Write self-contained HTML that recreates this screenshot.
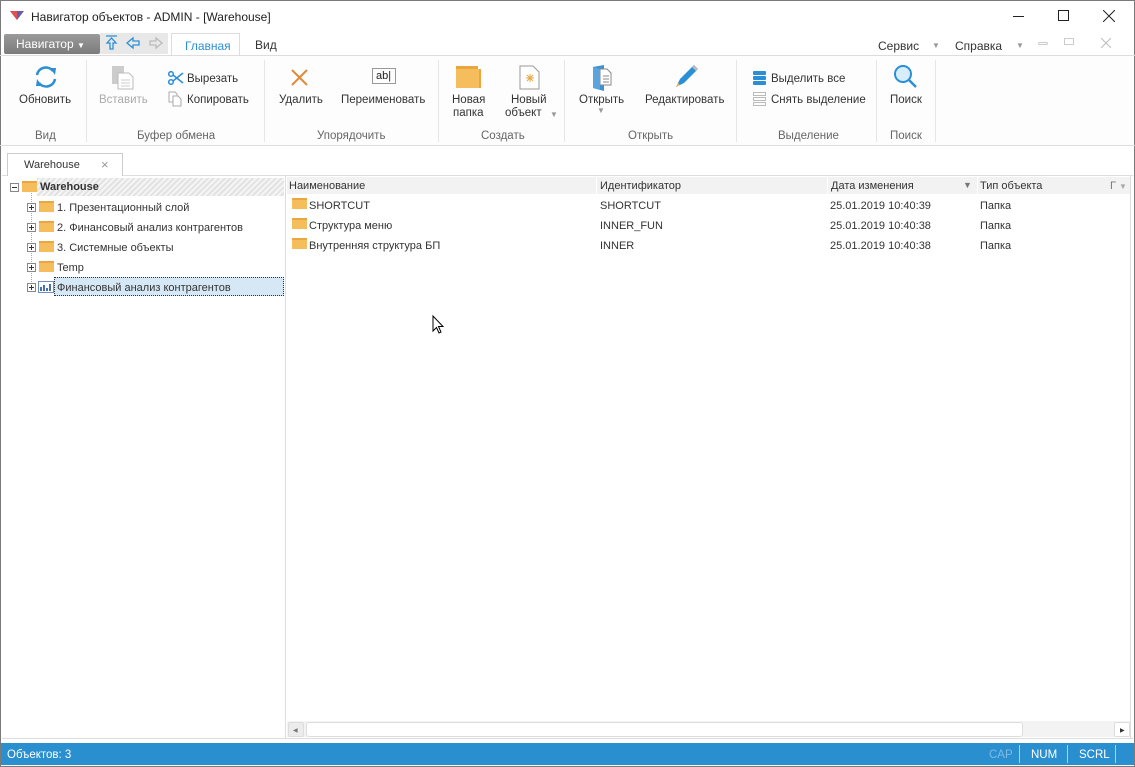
<!DOCTYPE html>
<html><head><meta charset="utf-8"><style>
*{margin:0;padding:0;box-sizing:border-box}
body{width:1135px;height:767px;position:relative;overflow:hidden;background:#fff;font-family:"Liberation Sans","DejaVu Sans",sans-serif;font-size:11px;color:#333}
.a{position:absolute;white-space:nowrap}
.lbl{color:#666}
.sep{position:absolute;top:60px;width:1px;height:82px;background:#e6e6e6}
.fold{position:absolute;width:15px;height:11px;background:#f6bd5d;border-top:2px solid #eaa640}
.pm{position:absolute;width:9px;height:9px;border:1px solid #888;background:#fff}
.pm:before{content:"";position:absolute;left:1px;top:3px;width:5px;height:1px;background:#333}
.pm.p:after{content:"";position:absolute;left:3px;top:1px;width:1px;height:5px;background:#333}
</style></head><body>
<div class="a" style="left:0;top:0;width:1135px;height:767px;border:1px solid #7a7a7a"></div>
<svg class="a" style="left:10px;top:11px" width="14" height="10"><path d="M0 0 L14 0 L7 9Z" fill="#6a5aa8"/><path d="M0 0 L7 0 L7 9Z" fill="#e05050"/></svg>
<div class="a" style="left:31px;top:10px;font-size:12px;color:#222">Навигатор объектов - ADMIN - [Warehouse]</div>
<div class="a" style="left:1013px;top:16px;width:11px;height:1px;background:#222"></div>
<div class="a" style="left:1058px;top:10px;width:11px;height:11px;border:1px solid #222"></div>
<svg class="a" style="left:1103px;top:10px" width="12" height="12"><path d="M0 0L12 12M12 0L0 12" stroke="#222"/></svg>
<div class="a" style="left:4px;top:34px;width:96px;height:20px;background:linear-gradient(#9a9a9a,#7c7c7c);border-radius:2px;color:#fff;font-size:12px;padding:3px 0 0 12px">Навигатор <span style="font-size:8px">▼</span></div>
<div class="a" style="left:100px;top:33px;width:68px;height:21px;background:#e8e8e8"></div>
<svg class="a" style="left:104px;top:35px" width="64" height="16"><path d="M2 1H13M7.5 3L3 8H6V14H9V8H12Z" fill="none" stroke="#2b8fd6" stroke-width="1.3"/><path d="M23 8L29 3V6H35V10H29V13Z" fill="none" stroke="#2b8fd6" stroke-width="1.3"/><path d="M58 8L52 3V6H46V10H52V13Z" fill="none" stroke="#bbb" stroke-width="1.3"/></svg>
<div class="a" style="left:171px;top:33px;width:69px;height:23px;background:#fff;border:1px solid #ddd;border-bottom:none;color:#2b8fd6;font-size:12px;padding:5px 0 0 13px">Главная</div>
<div class="a" style="left:255px;top:38px;font-size:12px">Вид</div>
<div class="a" style="left:878px;top:39px;font-size:12px">Сервис</div>
<div class="a" style="left:932px;top:41px;font-size:8px;color:#999">▼</div>
<div class="a" style="left:955px;top:39px;font-size:12px">Справка</div>
<div class="a" style="left:1016px;top:41px;font-size:8px;color:#999">▼</div>
<div class="a" style="left:1038px;top:42px;width:10px;height:3px;border:1px solid #ccc;border-radius:2px"></div>
<div class="a" style="left:1064px;top:38px;width:10px;height:7px;border:1px solid #ccc"></div>
<svg class="a" style="left:1101px;top:38px" width="10" height="10"><path d="M0 0L10 10M10 0L0 10" stroke="#bbb"/></svg>
<div class="a" style="left:0;top:55px;width:1135px;height:1px;background:#ddd"></div>
<div class="a" style="left:1px;top:56px;width:1133px;height:90px;background:#fdfdfd"></div>
<div class="a" style="left:0;top:145px;width:1135px;height:1px;background:#ddd"></div>
<svg class="a" style="left:33px;top:64px" width="26" height="26"><path d="M4 11A9 9 0 0 1 20 7" fill="none" stroke="#2b8fd6" stroke-width="2.5"/><path d="M22 15A9 9 0 0 1 6 19" fill="none" stroke="#2b8fd6" stroke-width="2.5"/><path d="M17 4L23 4L22 11Z M9 22L3 22L4 15Z" fill="#2b8fd6"/></svg>
<div class="a" style="left:19px;top:94px;font-size:11.5px">Обновить</div>
<div class="a lbl" style="left:35px;top:130px;font-size:11.5px">Вид</div>
<div class="sep" style="left:86px"></div>
<svg class="a" style="left:111px;top:65px" width="24" height="26"><rect x="1" y="1" width="12" height="18" fill="#ccc"/><path d="M7 8H18L22 12V24H7Z" fill="#fff" stroke="#bbb"/><path d="M10 15H19M10 18H19M10 21H19" stroke="#ccc"/></svg>
<div class="a" style="left:99px;top:94px;font-size:11.5px;color:#aaa">Вставить</div>
<svg class="a" style="left:168px;top:71px" width="16" height="14"><circle cx="3" cy="3" r="2.3" fill="none" stroke="#2b8fd6" stroke-width="1.5"/><circle cx="3" cy="11" r="2.3" fill="none" stroke="#2b8fd6" stroke-width="1.5"/><path d="M5 4L15 12M5 10L15 2" stroke="#2b8fd6" stroke-width="1.6"/></svg>
<div class="a" style="left:187px;top:73px;font-size:11.5px">Вырезать</div>
<svg class="a" style="left:168px;top:91px" width="14" height="16"><path d="M1 1H7L9 3V11H1Z" fill="#fff" stroke="#aaa"/><path d="M5 5H10L13 8V15H5Z" fill="#fff" stroke="#aaa"/></svg>
<div class="a" style="left:187px;top:94px;font-size:11.5px">Копировать</div>
<div class="a lbl" style="left:137px;top:130px;font-size:11.5px">Буфер обмена</div>
<div class="sep" style="left:264px"></div>
<svg class="a" style="left:291px;top:69px" width="17" height="17"><path d="M1 1L16 16M16 1L1 16" stroke="#e08a3c" stroke-width="2"/></svg>
<div class="a" style="left:279px;top:94px;font-size:11.5px">Удалить</div>
<div class="a" style="left:372px;top:68px;width:24px;height:16px;border:1px solid #999;font-size:11px;padding:1px 0 0 3px;color:#222">ab|</div>
<div class="a" style="left:341px;top:94px;font-size:11.5px">Переименовать</div>
<div class="a lbl" style="left:317px;top:130px;font-size:11.5px">Упорядочить</div>
<div class="sep" style="left:438px"></div>
<div class="a" style="left:456px;top:66px;width:22px;height:4px;background:#eaa640"></div>
<div class="a" style="left:456px;top:69px;width:25px;height:19px;background:#f6bd5d;border-right:2px solid #eaa640"></div>
<div class="a" style="left:452px;top:94px;font-size:11.5px">Новая</div>
<div class="a" style="left:453px;top:107px;font-size:11.5px">папка</div>
<svg class="a" style="left:519px;top:65px" width="22" height="25"><path d="M1 1H14L20 7V24H1Z" fill="#fff" stroke="#999"/><path d="M11 9V17M7 13H15M8 10L14 16M14 10L8 16" stroke="#eaa640"/></svg>
<div class="a" style="left:511px;top:94px;font-size:11.5px">Новый</div>
<div class="a" style="left:505px;top:107px;font-size:11.5px">объект</div>
<div class="a" style="left:550px;top:110px;font-size:8px;color:#999">▼</div>
<div class="a lbl" style="left:481px;top:130px;font-size:11.5px">Создать</div>
<div class="sep" style="left:564px"></div>
<svg class="a" style="left:592px;top:64px" width="24" height="28"><path d="M1 3L12 1V27L1 24Z" fill="#3d92d6"/><path d="M8 5H15L19 9V21H8Z" fill="#fff" stroke="#888"/><path d="M11 12H17M11 15H17M11 18H17" stroke="#888"/><path d="M1 3L8 5V25L1 24Z" fill="#5aa5e0"/></svg>
<div class="a" style="left:579px;top:94px;font-size:11.5px">Открыть</div>
<div class="a" style="left:597px;top:106px;font-size:8px;color:#999">▼</div>
<svg class="a" style="left:672px;top:63px" width="28" height="28"><path d="M4 24L8 16L22 2L26 6L12 20Z" fill="#2b8fd6"/><path d="M22 2L26 6L24 8L20 4Z" fill="#bbb"/><path d="M4 24L6 20L8 22Z" fill="#f2b25a"/></svg>
<div class="a" style="left:645px;top:94px;font-size:11.5px">Редактировать</div>
<div class="a lbl" style="left:628px;top:130px;font-size:11.5px">Открыть</div>
<div class="sep" style="left:736px"></div>
<svg class="a" style="left:753px;top:71px" width="13" height="15"><rect x="0" y="0" width="13" height="4" rx="1" fill="#2b8fd6"/><rect x="0" y="5" width="13" height="4" rx="1" fill="#2b8fd6"/><rect x="0" y="10" width="13" height="4" rx="1" fill="#2b8fd6"/></svg>
<div class="a" style="left:771px;top:73px;font-size:11.5px">Выделить все</div>
<svg class="a" style="left:753px;top:92px" width="13" height="15"><rect x=".5" y=".5" width="12" height="3" fill="none" stroke="#bbb"/><rect x=".5" y="5.5" width="12" height="3" fill="none" stroke="#bbb"/><rect x=".5" y="10.5" width="12" height="3" fill="none" stroke="#bbb"/></svg>
<div class="a" style="left:771px;top:94px;font-size:11.5px">Снять выделение</div>
<div class="a lbl" style="left:778px;top:130px;font-size:11.5px">Выделение</div>
<div class="sep" style="left:876px"></div>
<svg class="a" style="left:893px;top:64px" width="26" height="26"><circle cx="10" cy="10" r="8" fill="#d7eefa" stroke="#2b8fd6" stroke-width="2"/><path d="M16 16L23 23" stroke="#2b8fd6" stroke-width="2.5"/></svg>
<div class="a" style="left:890px;top:94px;font-size:11.5px">Поиск</div>
<div class="a lbl" style="left:890px;top:130px;font-size:11.5px">Поиск</div>
<div class="sep" style="left:935px"></div>
<div class="a" style="left:2px;top:175px;width:1131px;height:1px;background:#ddd"></div>
<div class="a" style="left:7px;top:153px;width:116px;height:23px;background:#fff;border:1px solid #ccc;border-bottom:none;font-size:11px;padding:5px 0 0 16px">Warehouse<span style="position:absolute;left:93px;top:3px;color:#999;font-size:13px">×</span></div>
<div class="a" style="left:285px;top:176px;width:1px;height:563px;background:#ddd"></div>
<div class="a" style="left:37px;top:178px;width:247px;height:18px;background:repeating-linear-gradient(135deg,#e2e2e2 0 2px,#f5f5f5 2px 4px)"></div>
<div class="pm" style="left:10px;top:183px"></div>
<div class="fold" style="left:22px;top:181px"></div>
<div class="a" style="left:40px;top:181px;font-weight:bold;font-size:11px">Warehouse</div>
<div class="a" style="left:31px;top:193px;width:1px;height:95px;border-left:1px dotted #aaa"></div>
<div class="pm p" style="left:27px;top:203px"></div><div class="fold" style="left:39px;top:201px"></div><div class="a" style="left:57px;top:202px">1. Презентационный слой</div>
<div class="pm p" style="left:27px;top:223px"></div><div class="fold" style="left:39px;top:221px"></div><div class="a" style="left:57px;top:222px">2. Финансовый анализ контрагентов</div>
<div class="pm p" style="left:27px;top:243px"></div><div class="fold" style="left:39px;top:241px"></div><div class="a" style="left:57px;top:242px">3. Системные объекты</div>
<div class="pm p" style="left:27px;top:263px"></div><div class="fold" style="left:39px;top:261px"></div><div class="a" style="left:57px;top:262px">Temp</div>
<div class="pm p" style="left:27px;top:283px"></div>
<svg class="a" style="left:38px;top:281px" width="16" height="12"><rect x=".5" y=".5" width="15" height="11" fill="#fff" stroke="#6d8fc2"/><path d="M3 10V6M6 10V4M9 10V7M12 10V3" stroke="#4a6fb0" stroke-width="2"/></svg>
<div class="a" style="left:54px;top:277px;width:230px;height:19px;background:#d6e8f5;border:1px dotted #333"></div>
<div class="a" style="left:57px;top:282px">Финансовый анализ контрагентов</div>
<div class="a" style="left:287px;top:177px;width:844px;height:17px;background:#f2f2f2"></div>
<div class="a" style="left:289px;top:180px">Наименование</div>
<div class="a" style="left:596px;top:177px;width:1px;height:17px;background:#fff"></div>
<div class="a" style="left:600px;top:180px">Идентификатор</div>
<div class="a" style="left:827px;top:177px;width:1px;height:17px;background:#fff"></div>
<div class="a" style="left:831px;top:180px">Дата изменения</div>
<div class="a" style="left:963px;top:180px;font-size:9px;color:#777">▼</div>
<div class="a" style="left:977px;top:177px;width:1px;height:17px;background:#fff"></div>
<div class="a" style="left:980px;top:180px">Тип объекта</div>
<div class="a" style="left:1110px;top:180px;color:#777">Г <span style="font-size:8px;color:#aaa">▼</span></div>
<div class="fold" style="left:292px;top:198px"></div><div class="a" style="left:309px;top:200px">SHORTCUT</div><div class="a" style="left:600px;top:200px">SHORTCUT</div><div class="a" style="left:830px;top:200px">25.01.2019 10:40:39</div><div class="a" style="left:980px;top:200px">Папка</div>
<div class="fold" style="left:292px;top:218px"></div><div class="a" style="left:309px;top:220px">Структура меню</div><div class="a" style="left:600px;top:220px">INNER_FUN</div><div class="a" style="left:830px;top:220px">25.01.2019 10:40:38</div><div class="a" style="left:980px;top:220px">Папка</div>
<div class="fold" style="left:292px;top:238px"></div><div class="a" style="left:309px;top:240px">Внутренняя структура БП</div><div class="a" style="left:600px;top:240px">INNER</div><div class="a" style="left:830px;top:240px">25.01.2019 10:40:38</div><div class="a" style="left:980px;top:240px">Папка</div>
<svg class="a" style="left:432px;top:315px" width="13" height="20"><path d="M1 1V16L4.5 12.5L7 18L9 17L6.5 11.5H11Z" fill="#fff" stroke="#000"/></svg>
<div class="a" style="left:287px;top:721px;width:844px;height:16px;background:#f3f3f3"></div>
<div class="a" style="left:288px;top:722px;width:16px;height:15px;background:#ececec;border:1px solid #ddd;border-radius:2px;font-size:6px;color:#777;padding:4px 0 0 4px">◀</div>
<div class="a" style="left:306px;top:722px;width:717px;height:15px;background:#fff;border:1px solid #ddd;border-radius:3px"></div>
<div class="a" style="left:1114px;top:722px;width:16px;height:15px;background:#fff;border:1px solid #ddd;border-radius:2px;font-size:6px;color:#333;padding:4px 0 0 5px">▶</div>
<div class="a" style="left:1130px;top:176px;width:1px;height:563px;background:#ddd"></div>
<div class="a" style="left:2px;top:738px;width:1131px;height:1px;background:#ddd"></div>
<div class="a" style="left:1px;top:743px;width:1133px;height:22px;background:#2a8fcf"></div>
<div class="a" style="left:7px;top:749px;color:#fff;font-size:11.5px">Объектов: 3</div>
<div class="a" style="left:989px;top:749px;color:#7dbbe5;font-size:11.5px">CAP</div>
<div class="a" style="left:1019px;top:745px;width:1px;height:18px;background:#fff;opacity:.6"></div>
<div class="a" style="left:1031px;top:749px;color:#fff;font-size:11.5px">NUM</div>
<div class="a" style="left:1067px;top:745px;width:1px;height:18px;background:#fff;opacity:.6"></div>
<div class="a" style="left:1079px;top:749px;color:#fff;font-size:11.5px">SCRL</div>
<div class="a" style="left:1115px;top:745px;width:1px;height:18px;background:#fff;opacity:.6"></div>
</body></html>
